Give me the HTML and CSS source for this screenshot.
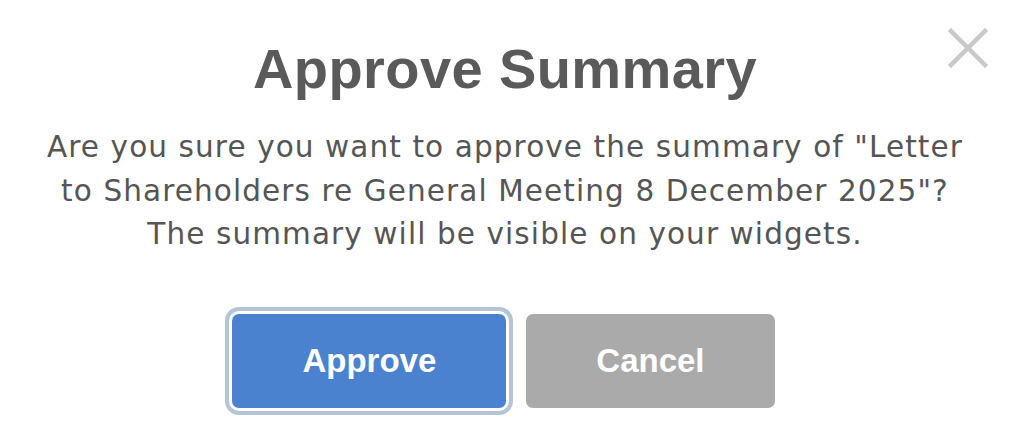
FILE: index.html
```html
<!DOCTYPE html>
<html lang="en">
<head>
    <meta charset="UTF-8">
    <title>Approve Summary</title>
    <link rel="stylesheet" href="styles.css">
</head>
<body>

    <div class="dialog">
        <button class="closeBtn" aria-label="Close">
            <svg width="40" height="40" viewBox="0 0 40 40">
                <path d="M3 3 L37 37 M37 3 L3 37" stroke="#c9c9c9" stroke-width="4.5" stroke-linecap="square" fill="none"/>
            </svg>
        </button>

        <h1 class="dialogTitle">Approve Summary</h1>

        <p class="dialogText">Are you sure you want to approve the summary of "Letter<br>to Shareholders re General Meeting 8 December 2025"?<br>The summary will be visible on your widgets.</p>

        <div class="dialogActions">
            <button class="btn btnApprove">Approve</button>
            <button class="btn btnCancel">Cancel</button>
        </div>
    </div>

</body>
</html>
```

FILE: styles.css
```css
body{
    margin: 0;
    background-color: #fff;
}

.dialog{
    position: relative;
    width: 1010px;
    height: 442px;
    text-align: center;
    padding-top: 37px;
    box-sizing: border-box;
}

.closeBtn{
    position: absolute;
    top: 28px;
    right: 22px;
    padding: 0;
    border: none;
    background: none;
    width: 40px;
    height: 40px;
}

.closeBtn svg{
    display: block;
}

.dialogTitle{
    margin: 0;
    font-family: "Liberation Sans", Arial, sans-serif;
    font-weight: bold;
    font-size: 56px;
    letter-spacing: 0.4px;
    line-height: 64px;
    color: #5a5a5a;
}

.dialogText{
    margin: 25px auto 0;
    width: 1000px;
    font-family: "DejaVu Sans", sans-serif;
    font-size: 29.5px;
    letter-spacing: 1.1px;
    line-height: 43.5px;
    color: #555;
}

.dialogActions{
    display: flex;
    justify-content: center;
    gap: 20px;
    margin-top: 57px;
    padding-right: 3px;
}

.btn{
    height: 94px;
    padding: 0 70px;
    border: none;
    border-radius: 7px;
    font-family: "Liberation Sans", Arial, sans-serif;
    font-weight: bold;
    font-size: 33px;
    color: #fff;
}

.btnApprove{
    background-color: #4a82cf;
    box-shadow: 0 0 0 3px #fff, 0 0 0 7px #b4c4d9;
}

.btnCancel{
    background-color: #aaaaaa;
}
```
